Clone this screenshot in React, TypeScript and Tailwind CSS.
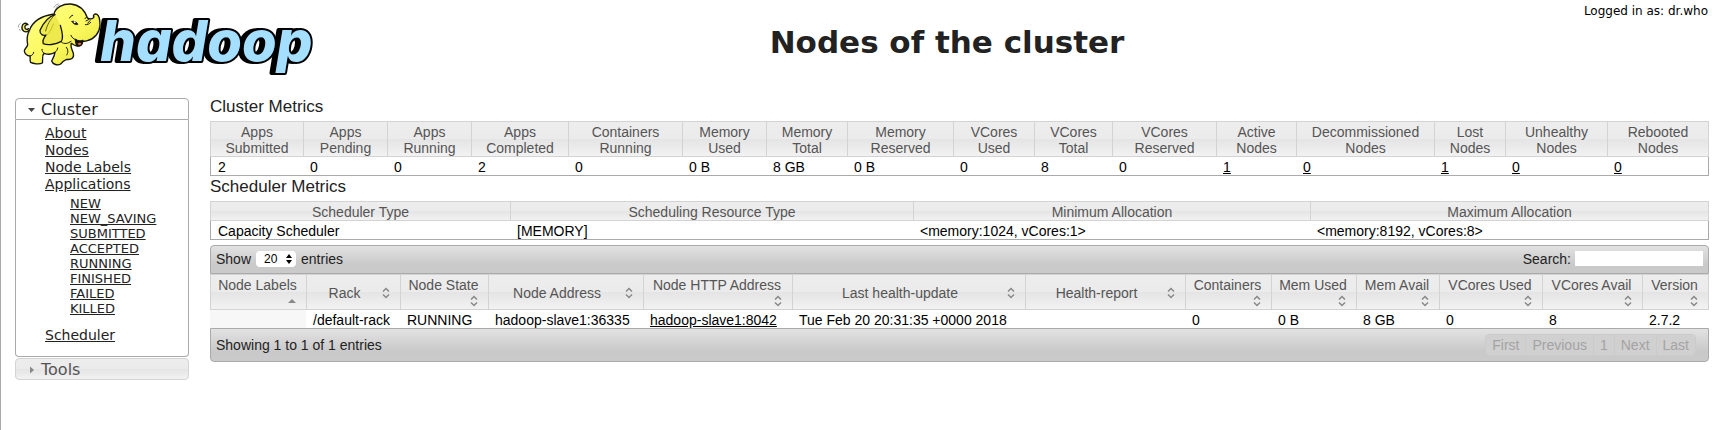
import { useState } from "react";
import type { ReactNode } from "react";

const HEAD_BG =
  "bg-[linear-gradient(to_bottom,#ededed_0%,#ebebeb_50%,#e4e4e4_50%,#f2f2f2_100%)]";
const BAR_BG = "bg-[linear-gradient(to_bottom,#e2e2e2_0%,#c9c9c9_70%,#cacaca_100%)]";

const clusterMetrics = [
  { head: ["Apps", "Submitted"], value: "2", width: "w-[93px]" },
  { head: ["Apps", "Pending"], value: "0", width: "w-[84px]" },
  { head: ["Apps", "Running"], value: "0", width: "w-[84px]" },
  { head: ["Apps", "Completed"], value: "2", width: "w-[97px]" },
  { head: ["Containers", "Running"], value: "0", width: "w-[114px]" },
  { head: ["Memory", "Used"], value: "0 B", width: "w-[84px]" },
  { head: ["Memory", "Total"], value: "8 GB", width: "w-[81px]" },
  { head: ["Memory", "Reserved"], value: "0 B", width: "w-[106px]" },
  { head: ["VCores", "Used"], value: "0", width: "w-[81px]" },
  { head: ["VCores", "Total"], value: "8", width: "w-[78px]" },
  { head: ["VCores", "Reserved"], value: "0", width: "w-[104px]" },
  { head: ["Active", "Nodes"], value: "1", width: "w-[80px]", link: true },
  { head: ["Decommissioned", "Nodes"], value: "0", width: "w-[138px]", link: true },
  { head: ["Lost", "Nodes"], value: "1", width: "w-[71px]", link: true },
  { head: ["Unhealthy", "Nodes"], value: "0", width: "w-[102px]", link: true },
  { head: ["Rebooted", "Nodes"], value: "0", width: "w-[102px]", link: true },
];

const schedulerMetrics = [
  { head: ["Scheduler Type"], value: "Capacity Scheduler", width: "w-[300px]" },
  { head: ["Scheduling Resource Type"], value: "[MEMORY]", width: "w-[403px]" },
  { head: ["Minimum Allocation"], value: "<memory:1024, vCores:1>", width: "w-[397px]" },
  { head: ["Maximum Allocation"], value: "<memory:8192, vCores:8>", width: "w-[399px]" },
];

const nodeColumns = [
  { head: "Node Labels", value: "", width: "w-[96px]", stacked: true, sorted: true },
  { head: "Rack", value: "/default-rack", width: "w-[94px]" },
  { head: "Node State", value: "RUNNING", width: "w-[88px]", stacked: true },
  { head: "Node Address", value: "hadoop-slave1:36335", width: "w-[155px]" },
  { head: "Node HTTP Address", value: "hadoop-slave1:8042", width: "w-[149px]", stacked: true, link: true },
  { head: "Last health-update", value: "Tue Feb 20 20:31:35 +0000 2018", width: "w-[233px]" },
  { head: "Health-report", value: "", width: "w-[160px]" },
  { head: "Containers", value: "0", width: "w-[86px]", stacked: true },
  { head: "Mem Used", value: "0 B", width: "w-[85px]", stacked: true },
  { head: "Mem Avail", value: "8 GB", width: "w-[83px]", stacked: true },
  { head: "VCores Used", value: "0", width: "w-[103px]", stacked: true },
  { head: "VCores Avail", value: "8", width: "w-[100px]", stacked: true },
  { head: "Version", value: "2.7.2", width: "w-[67px]", stacked: true },
];

const appStates = ["NEW", "NEW_SAVING", "SUBMITTED", "ACCEPTED", "RUNNING", "FINISHED", "FAILED", "KILLED"];

function Logo() {
  return (
    <svg viewBox="3 0 957 225" className="h-[75px] w-[319px] shrink-0" role="img" aria-label="Hadoop">
      <defs>
        <linearGradient id="hide" x1="0" y1="0" x2="1" y2="1">
          <stop offset="0" stopColor="#ffff8c" />
          <stop offset="0.55" stopColor="#fbf95e" />
          <stop offset="1" stopColor="#e3dd3c" />
        </linearGradient>
      </defs>
      <text
        x="301"
        y="183"
        fontFamily="Inter, 'Liberation Sans', sans-serif"
        fontWeight="800"
        fontStyle="italic"
        fontSize="168"
        strokeLinejoin="round"
        strokeWidth="12"
        stroke="#000"
        fill="#a5dfff"
        paintOrder="stroke"
        className="drop-shadow-[-12px_0px_0px_#000]"
      >
        hadoop
      </text>
      <g strokeLinecap="round" strokeLinejoin="round" stroke="#15150a" strokeWidth="4">
        <path d="M86 92C76 100 64 93 66 80C67 70 78 66 84 74C77 73 72 79 76 86C79 90 83 88 86 86" fill="#f3ef55" />
        <path
          d="M88 92C98 62 128 47 162 42C166 22 190 11 212 12C236 14 254 31 262 53C270 59 279 57 282 51C277 46 284 40 291 43C300 48 300 62 300 76C299 98 284 116 262 122C256 124 251 124 247 123C249 133 241 140 231 138C225 137 219 134 214 130C210 140 216 148 220 160C223 174 215 180 200 178C192 181 187 185 182 192C173 198 158 193 155 183C158 176 163 170 165 157C156 164 144 164 132 160C124 168 130 180 127 189C118 194 99 191 92 187C88 180 92 173 90 168C82 168 73 161 73 152C75 144 82 142 83 134C80 118 81 104 88 92Z"
          fill="url(#hide)"
        />
        <path
          d="M165 44C142 51 129 71 120 91C119 104 130 108 138 105C131 114 127 124 130 131C142 137 166 134 184 124C190 116 187 96 181 76"
          fill="#eeea4e"
        />
        <path d="M165 44C150 58 141 76 137 93" fill="none" strokeWidth="2" />
        <path d="M160 72C155 84 151 96 141 105" fill="none" stroke="#c5bd26" strokeWidth="3" />
        <path d="M226 118C233 123 242 124 248 121C249 132 243 139 233 137C227 134 227 126 226 118Z" fill="#16110a" />
        <path d="M233 131C237 126 243 128 244 132C240 137 236 136 233 131Z" fill="#e46b48" stroke="none" />
        <path d="M213 106C216 114 221 117 228 119M185 127C193 133 204 131 213 124" fill="none" strokeWidth="3" />
        <path d="M216 64C222 62 230 65 234 73C226 76 219 72 216 64Z" fill="#16110a" strokeWidth="2" />
        <circle cx="224" cy="67" r="3" fill="#fff" stroke="none" />
        <path d="M209 54C211 49 214 47 218 46M255 56C257 50 262 51 264 56M258 63L267 58M263 69L271 61M256 74C262 75 268 72 272 67" fill="none" strokeWidth="3" />
        <path d="M199 142C205 149 205 159 200 165M165 157C169 154 172 150 173 144M132 160C128 157 126 153 126 148M90 168C96 167 100 163 101 157" fill="none" strokeWidth="3" />
        <path d="M162 22C164 17 169 13 175 12M168 24C170 19 174 17 178 16M55 81C55 76 58 72 61 70M61 92L58 88" fill="none" stroke="#777" strokeWidth="2" />
      </g>
    </svg>
  );
}

function SortIcon({ sorted }: { sorted?: boolean }) {
  return (
    <svg viewBox="0 0 16 16" className="size-4 shrink-0" aria-hidden="true">
      {sorted ? (
        <path d="M4 10L8 6L12 10Z" fill="#888" />
      ) : (
        <path d="M5 6.5L8 3.5L11 6.5M5 9.5L8 12.5L11 9.5" fill="none" stroke="#888" strokeWidth="1.5" />
      )}
    </svg>
  );
}

type Metric = { head: string[]; value: string; width: string; link?: boolean };

function MetricsTable({ title, columns }: { title: string; columns: Metric[] }) {
  return (
    <section aria-label={title}>
      <h2 className="pt-[3px] pb-1.5 text-[17px] leading-4 text-[#222]">{title}</h2>
      <table className="w-full table-fixed border-separate border-spacing-0">
        <thead>
          <tr>
            {columns.map((c, i) => (
              <th
                key={i}
                className={`${c.width} ${HEAD_BG} border-y border-l border-[#d3d3d3] pt-0.5 text-center leading-4 font-normal text-[#555] last:border-r`}
              >
                {c.head.map((line) => (
                  <span key={line} className="block">{line}</span>
                ))}
              </th>
            ))}
          </tr>
        </thead>
        <tbody>
          <tr>
            {columns.map((c, i) => (
              <td
                key={i}
                className="border-b border-[#aaa] pt-0.5 pl-[7px] leading-4 whitespace-nowrap text-black first:border-l last:border-r"
              >
                {c.link ? <a href="#nodes" className="underline">{c.value}</a> : c.value}
              </td>
            ))}
          </tr>
        </tbody>
      </table>
    </section>
  );
}

function NodesTable() {
  return (
    <section aria-label="Nodes" className="mt-[5px]">
      <div className={`${BAR_BG} flex h-[29px] items-center justify-between rounded-t border border-[#aaa] px-[5px] pb-0.5 text-[#222]`}>
        <label className="flex items-center gap-[5px]">
          Show
          <span className="relative flex items-center">
            <select
              defaultValue="20"
              className="h-4 w-10 appearance-none rounded bg-white pl-2 text-[12px] leading-4 text-black"
            >
              <option>20</option>
              <option>40</option>
              <option>60</option>
              <option>80</option>
              <option>100</option>
            </select>
            <svg viewBox="0 0 6 10" className="pointer-events-none absolute right-1 h-[10px] w-[6px]" aria-hidden="true">
              <path d="M0 4L3 0L6 4ZM0 6L3 10L6 6Z" fill="#000" />
            </svg>
          </span>
          entries
        </label>
        <label className="flex items-center gap-1">
          Search:
          <input type="text" className="h-[15px] w-32 bg-white px-1 text-[12px]" />
        </label>
      </div>
      <table className="w-full table-fixed border-separate border-spacing-0">
        <thead>
          <tr>
            {nodeColumns.map((c) => (
              <th
                key={c.head}
                className={`${c.width} ${HEAD_BG} h-9 border-y border-l border-[#d3d3d3] pt-0.5 leading-4 font-normal whitespace-nowrap text-[#555] last:border-r`}
              >
                {c.stacked ? (
                  <div className="flex flex-col pr-0.5">
                    <span className="text-center">{c.head}</span>
                    <span className="flex justify-end pr-1"><SortIcon sorted={c.sorted} /></span>
                  </div>
                ) : (
                  <div className="flex items-center pr-1.5 pl-1">
                    <span className="flex-1 text-center">{c.head}</span>
                    <SortIcon />
                  </div>
                )}
              </th>
            ))}
          </tr>
        </thead>
        <tbody>
          <tr>
            {nodeColumns.map((c) => (
              <td key={c.head} className="h-[18px] pt-0.5 pl-[7px] leading-4 whitespace-nowrap text-black first:bg-[#f7f7f7]">
                {c.link ? <a href="#node" className="underline">{c.value}</a> : c.value}
              </td>
            ))}
          </tr>
        </tbody>
      </table>
      <div className={`${BAR_BG} flex h-[34px] items-center justify-between rounded-b border border-[#aaa] pr-3 pl-[5px] text-[#222]`}>
        <p>Showing 1 to 1 of 1 entries</p>
        <div className="flex h-[22px] rounded border border-[#cbcbcb] text-[#a3a3a3]">
          {["First", "Previous", "1", "Next", "Last"].map((label) => (
            <button
              key={label}
              type="button"
              disabled
              className="border-r border-[#cbcbcb] bg-[#d0d0d0] px-1.5 first:rounded-l last:rounded-r last:border-r-0"
            >
              {label}
            </button>
          ))}
        </div>
      </div>
    </section>
  );
}

function Panel({ title, initiallyOpen, children }: { title: string; initiallyOpen?: boolean; children?: ReactNode }) {
  const [open, setOpen] = useState(!!initiallyOpen);
  return (
    <div className="mb-px">
      <h3>
        <button
          type="button"
          aria-expanded={open}
          onClick={() => setOpen(!open)}
          className={`flex h-[22px] w-full items-center gap-[3px] border pt-px pl-2 text-[16px] ${
            open ? "rounded-t border-[#aaa] bg-white text-[#222]" : `rounded border-[#d3d3d3] text-[#555] ${HEAD_BG}`
          }`}
        >
          <svg viewBox="0 0 14 14" className="size-3.5" aria-hidden="true">
            {open ? <path d="M4 5H11L7.5 9Z" fill="#454545" /> : <path d="M6 3.5V10.5L10 7Z" fill="#888" />}
          </svg>
          {title}
        </button>
      </h3>
      {open && (
        <div className="rounded-b border border-t-0 border-[#aaa] bg-white pt-[5px] pb-3 pl-[29px] text-[14px] text-[#222]">
          {children}
        </div>
      )}
    </div>
  );
}

export default function App() {
  return (
    <div className="min-h-screen border-l border-[#aaa] bg-white font-['Liberation_Sans',Arial,sans-serif] text-[14px] leading-4">
      <header className="flex h-24 items-start font-['DejaVu_Sans',Verdana,sans-serif] text-[#222]">
        <Logo />
        <h1 className="flex-1 pt-6 text-center text-[31px] leading-9 font-bold">Nodes of the cluster</h1>
        <p className="w-36 pt-[3px] pr-2.5 text-right text-[12px] text-black">Logged in as: dr.who</p>
      </header>
      <div className="flex items-start gap-[21px] pr-[9px] pl-3.5">
        <nav className="w-[174px] shrink-0 pt-0.5 font-['DejaVu_Sans',Verdana,sans-serif]">
          <Panel title="Cluster" initiallyOpen>
            <ul className="leading-[17px]">
              {["About", "Nodes", "Node Labels"].map((item) => (
                <li key={item}><a href="#cluster" className="underline">{item}</a></li>
              ))}
              <li>
                <a href="#apps" className="underline">Applications</a>
                <ul className="mt-[3px] mb-[11px] pl-[25px] text-[13px] leading-[15px]">
                  {appStates.map((s) => (
                    <li key={s}><a href="#apps" className="underline">{s}</a></li>
                  ))}
                </ul>
              </li>
              <li><a href="#scheduler" className="underline">Scheduler</a></li>
            </ul>
          </Panel>
          <Panel title="Tools" />
        </nav>
        <main className="min-w-0 flex-1">
          <MetricsTable title="Cluster Metrics" columns={clusterMetrics} />
          <MetricsTable title="Scheduler Metrics" columns={schedulerMetrics} />
          <NodesTable />
        </main>
      </div>
    </div>
  );
}
